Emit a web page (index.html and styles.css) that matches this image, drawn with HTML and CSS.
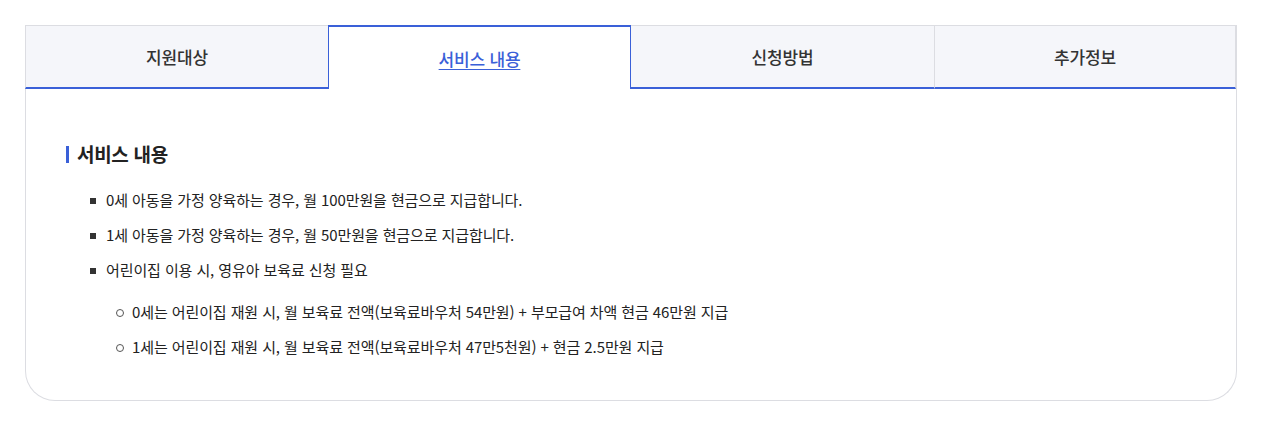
FILE: index.html
```html
<!DOCTYPE html>
<html lang="ko">
<head>
<meta charset="utf-8">
<link rel="stylesheet" href="styles.css">
</head>
<body>
<div class="card">
  <div class="tabs">
    <div class="tab">지원대상</div>
    <div class="tab active"><span>서비스 내용</span></div>
    <div class="tab">신청방법</div>
    <div class="tab last">추가정보</div>
  </div>
  <div class="content">
    <h3 class="title">서비스 내용</h3>
    <ul class="list">
      <li>0세 아동을 가정 양육하는 경우, 월 100만원을 현금으로 지급합니다.</li>
      <li>1세 아동을 가정 양육하는 경우, 월 50만원을 현금으로 지급합니다.</li>
      <li>어린이집 이용 시, 영유아 보육료 신청 필요
        <ul class="sub">
          <li>0세는 어린이집 재원 시, 월 보육료 전액(보육료바우처 54만원) + 부모급여 차액 현금 46만원 지급</li>
          <li>1세는 어린이집 재원 시, 월 보육료 전액(보육료바우처 47만5천원) + 현금 2.5만원 지급</li>
        </ul>
      </li>
    </ul>
  </div>
</div>
</body>
</html>
```

FILE: styles.css
```css
* { box-sizing: border-box; }
html, body { margin: 0; padding: 0; background: #fff; }
body {
  padding: 25px 29px 0 25px;
  font-family: "Noto Sans CJK KR", "Noto Sans", sans-serif;
  color: #222;
}
.card {
  width: 1212px;
  border: 1px solid #dcdde2;
  border-top: none;
  border-radius: 0 0 30px 30px;
  background: #fff;
}
.tabs {
  display: grid;
  grid-template-columns: 303px 303px 303px 302px;
  margin-left: -1px;
  margin-right: -1px;
}
.tab {
  height: 64px;
  display: flex;
  align-items: center;
  justify-content: center;
  background: #f5f6fa;
  border-top: 1px solid #dcdde2;
  border-left: 1px solid #dcdde2;
  border-bottom: 2px solid #3a60d8;
  font-size: 17px;
  font-weight: 500;
  color: #333;
  letter-spacing: -0.2px;
}
.tab.last { border-right: 1px solid #dcdde2; }
.tab.active {
  background: #fff;
  border: 1px solid #3a60d8;
  border-top-width: 2px;
  border-bottom: none;
  color: #3a60d8;
}
.tab.active + .tab { border-left: none; }
.tab.active span {
  text-decoration: underline;
  text-underline-offset: 3px;
  text-decoration-thickness: 1px;
}
.content {
  padding: 53px 40px 43px 40px;
}
.title {
  margin: 0 0 24px 0;
  font-size: 19px;
  font-weight: 700;
  line-height: 24px;
  color: #222;
  letter-spacing: -0.3px;
  display: flex;
  align-items: center;
}
.title::before {
  content: "";
  width: 3px;
  height: 17px;
  background: #3a60d8;
  margin-right: 8px;
}
.list {
  list-style: none;
  margin: 0;
  padding: 0 0 0 24px;
}
.list > li {
  position: relative;
  padding-left: 16px;
  font-size: 15px;
  line-height: 20px;
  letter-spacing: -0.1px;
  margin-bottom: 15px;
}
.list > li::before {
  content: "";
  position: absolute;
  left: 0;
  top: 8px;
  width: 6px;
  height: 6px;
  background: #333;
}
.list > li:last-child { margin-bottom: 0; }
.sub {
  list-style: none;
  margin: 22px 0 0 0;
  padding: 0 0 0 10px;
}
.sub li {
  position: relative;
  padding-left: 16px;
  margin-bottom: 15px;
}
.sub li:last-child { margin-bottom: 0; }
.sub li::before {
  content: "";
  position: absolute;
  left: 0;
  top: 7px;
  width: 6px;
  height: 6px;
  border: 1px solid #555;
  border-radius: 50%;
}
```
